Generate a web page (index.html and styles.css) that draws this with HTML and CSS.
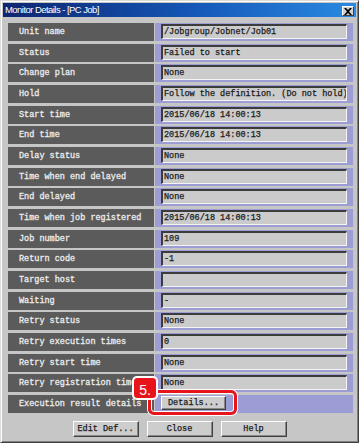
FILE: index.html
```html
<!DOCTYPE html>
<html>
<head>
<meta charset="utf-8">
<link rel="stylesheet" href="styles.css">
</head>
<body>
<div class="window">
  <div class="titlebar">
    <span class="title">Monitor Details - [PC Job]</span>
    <span class="close"><svg width="8" height="7" viewBox="0 0 8 7"><path d="M0 0h2l2 2 2-2h2L5 3.5 8 7H6L4 5 2 7H0l3-3.5z" fill="#000"/></svg></span>
  </div>
  <div class="grid">
    <div class="label">Unit name</div><div class="value"><div class="field">/Jobgroup/Jobnet/Job01</div></div>
    <div class="label">Status</div><div class="value"><div class="field">Failed to start</div></div>
    <div class="label">Change plan</div><div class="value"><div class="field">None</div></div>
    <div class="label">Hold</div><div class="value"><div class="field">Follow the definition. (Do not hold)</div></div>
    <div class="label">Start time</div><div class="value"><div class="field">2015/06/18 14:00:13</div></div>
    <div class="label">End time</div><div class="value"><div class="field">2015/06/18 14:00:13</div></div>
    <div class="label">Delay status</div><div class="value"><div class="field">None</div></div>
    <div class="label">Time when end delayed</div><div class="value"><div class="field">None</div></div>
    <div class="label">End delayed</div><div class="value"><div class="field">None</div></div>
    <div class="label">Time when job registered</div><div class="value"><div class="field">2015/06/18 14:00:13</div></div>
    <div class="label">Job number</div><div class="value"><div class="field">109</div></div>
    <div class="label">Return code</div><div class="value"><div class="field">-1</div></div>
    <div class="label">Target host</div><div class="value"><div class="field"></div></div>
    <div class="label">Waiting</div><div class="value"><div class="field">-</div></div>
    <div class="label">Retry status</div><div class="value"><div class="field">None</div></div>
    <div class="label">Retry execution times</div><div class="value"><div class="field">0</div></div>
    <div class="label">Retry start time</div><div class="value"><div class="field">None</div></div>
    <div class="label">Retry registration time</div><div class="value"><div class="field">None</div></div>
    <div class="label">Execution result details</div><div class="value"><div class="btn details">Details...</div></div>
  </div>
  <div class="buttons">
    <div class="btn">Edit Def...</div>
    <div class="btn">Close</div>
    <div class="btn">Help</div>
  </div>
  <div class="callout"></div>
  <div class="badge">5.</div>
</div>
</body>
</html>
```
FILE: styles.css
```css
html, body {
  margin: 0;
  padding: 0;
  background: #ffffff;
}
.window {
  position: relative;
  box-sizing: border-box;
  width: 359px;
  height: 443px;
  padding: 2px;
  background: #c6c6c6;
  border-top: 1px solid #dcdcdc;
  border-left: 1px solid #dcdcdc;
  border-right: 1px solid #404040;
  border-bottom: 1px solid #404040;
  box-shadow: inset 1px 1px 0 #ffffff, inset -1px -1px 0 #808080;
}
.titlebar {
  height: 14px;
  display: flex;
  align-items: center;
  justify-content: space-between;
  padding-left: 2px;
  padding-right: 2px;
  background: linear-gradient(to right, #0d2670, #1558b8 55%, #2a8ae0);
}
.title {
  font-family: "Liberation Sans", Arial, sans-serif;
  font-size: 9.5px;
  letter-spacing: -0.55px;
  color: #ffffff;
  line-height: 14px;
}
.close {
  box-sizing: border-box;
  width: 12px;
  height: 10px;
  margin-top: 2px;
  background: #d0d0d0;
  border-top: 1px solid #ffffff;
  border-left: 1px solid #ffffff;
  border-right: 1px solid #404040;
  border-bottom: 1px solid #404040;
  display: flex;
  align-items: center;
  justify-content: center;
}
.close svg { display: block; }
.grid {
  display: grid;
  grid-template-columns: 146px 198px;
  column-gap: 1px;
  grid-auto-rows: 18px;
  row-gap: 2.67px;
  margin: 6px 0 0 5px;
}
.label {
  background: #5b5b5b;
  color: #ececec;
  font-family: "Liberation Mono", "DejaVu Sans Mono", monospace;
  font-size: 8.5px;
  -webkit-text-stroke: 0.3px #ececec;
  line-height: 18px;
  padding-left: 11px;
  white-space: nowrap;
  overflow: hidden;
}
.value {
  background: #9d9dd6;
  padding: 1px 6px 2px 6px;
}
.field {
  box-sizing: border-box;
  height: 15px;
  background: #cbcbcb;
  border-top: 2px solid #3c3c3c;
  border-left: 2px solid #3c3c3c;
  border-right: 1px solid #f4f4f4;
  border-bottom: 1px solid #f4f4f4;
  padding-left: 1px;
  font-family: "Liberation Mono", "DejaVu Sans Mono", monospace;
  font-size: 8.5px;
  -webkit-text-stroke: 0.25px #1a1a1a;
  line-height: 12px;
  color: #1a1a1a;
  white-space: nowrap;
  overflow: hidden;
}
.btn {
  box-sizing: border-box;
  width: 66px;
  height: 16px;
  background: #cdcdcd;
  border-top: 1px solid #ffffff;
  border-left: 1px solid #ffffff;
  border-right: 1px solid #404040;
  border-bottom: 1px solid #404040;
  box-shadow: inset -1px -1px 0 #888888;
  font-family: "Liberation Mono", "DejaVu Sans Mono", monospace;
  font-size: 8.5px;
  -webkit-text-stroke: 0.25px #1a1a1a;
  color: #1a1a1a;
  display: flex;
  align-items: center;
  justify-content: center;
}
.details {
  width: 65px;
  height: 14px;
}
.buttons {
  display: flex;
  justify-content: center;
  gap: 8px;
  margin-top: 8px;
}
.callout {
  position: absolute;
  left: 147px;
  top: 389px;
  width: 83px;
  height: 19px;
  border: 3px solid #e8141c;
  border-radius: 6px;
  box-shadow: 0 0 0 1px #ffffff, inset 0 0 0 1px #ffffff;
}
.badge {
  position: absolute;
  left: 132px;
  top: 376px;
  box-sizing: border-box;
  width: 24px;
  height: 22px;
  background: #e8141c;
  border: 1px solid #ffffff;
  border-radius: 4px;
  box-shadow: 0 0 0 1px #ffffff;
  color: #ffffff;
  font-family: "Liberation Sans", Arial, sans-serif;
  font-size: 14px;
  line-height: 24px;
  text-align: center;
}
```
